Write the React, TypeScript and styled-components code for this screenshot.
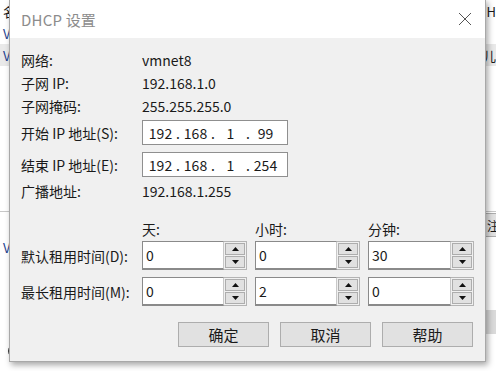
import React from "react";
import styled, { createGlobalStyle } from "styled-components";

const GlobalStyle = createGlobalStyle`
  html, body {
    margin: 0;
    padding: 0;
    background: #ffffff;
    overflow: hidden;
  }
  body {
    font-family: "Noto Sans CJK SC", "Noto Sans", sans-serif;
    font-size: 14px;
    color: #1a1a1a;
  }
`;

const Screen = styled.div`
  position: relative;
  width: 496px;
  height: 371px;
  overflow: hidden;
  background: #ffffff;
`;

/* the window behind the dialog, mostly hidden */
const BgWindow = styled.div`
  display: flex;
  flex-direction: column;
  width: 496px;
  height: 371px;
`;

const BgRow = styled.div<{ $h: number; $bg?: string; $line?: boolean }>`
  display: flex;
  align-items: center;
  justify-content: space-between;
  height: ${({ $h }) => $h}px;
  padding: 0 0 0 3px;
  background: ${({ $bg }) => $bg || "transparent"};
  border-bottom: ${({ $line }) => ($line ? "1px solid #c8c8c8" : "none")};
  box-sizing: border-box;
  font-size: 13px;
  white-space: nowrap;
  overflow: hidden;
`;

const BgText = styled.span<{ $color?: string }>`
  color: ${({ $color }) => $color || "#1a1a1a"};
`;

const BgButton = styled.div`
  height: 24px;
  width: 12px;
  border: 1px solid #adadad;
  border-right: none;
  background: #e1e1e1;
  display: flex;
  align-items: center;
  padding-left: 2px;
  box-sizing: border-box;
  overflow: hidden;
  font-size: 12px;
`;

const BgBar = styled.div`
  height: 24px;
  margin-left: 486px;
  background: #dadada;
`;

const BgRadio = styled.div`
  width: 14px;
  height: 14px;
  border-radius: 50%;
  border: 1px solid #333;
  margin-left: 5px;
`;

const Dialog = styled.div`
  position: absolute;
  left: 9px;
  top: -1px;
  width: 477px;
  height: 363px;
  display: flex;
  flex-direction: column;
  background: #f0f0f0;
  border: 1px solid #a8a8a8;
  box-sizing: border-box;
  box-shadow: 2px 3px 6px rgba(0, 0, 0, 0.35);
`;

const TitleBar = styled.div`
  height: 38px;
  flex: none;
  background: #ffffff;
  display: flex;
  align-items: center;
  justify-content: space-between;
  padding: 0 13px 0 11px;
`;

const Title = styled.span`
  font-size: 15px;
  color: #8c8c8c;
  letter-spacing: 0.2px;
`;

const Body = styled.div`
  display: flex;
  flex-direction: column;
  padding: 10px 12px 0 11px;
`;

const Row = styled.div<{ $h: number; $mt?: number }>`
  display: grid;
  grid-template-columns: 121px auto;
  align-items: center;
  height: ${({ $h }) => $h}px;
  margin-top: ${({ $mt }) => $mt || 0}px;
`;

const Label = styled.span`
  white-space: nowrap;
`;

const Value = styled.span``;

const IpField = styled.div`
  width: 146px;
  height: 25px;
  box-sizing: border-box;
  border: 1px solid #8f8f8f;
  background: #ffffff;
  display: flex;
  align-items: center;
  padding-left: 3px;
`;

const Octet = styled.span`
  width: 29px;
  text-align: center;
`;

const Dot = styled.span`
  width: 6px;
  text-align: center;
`;

const TimeGrid = styled.div`
  display: grid;
  grid-template-columns: 113px 105px 105px 106px;
  grid-template-rows: 10px 29px 29px;
  column-gap: 8px;
  row-gap: 7px;
  align-items: center;
  margin-top: 22px;
`;

const HeaderCell = styled.span`
  line-height: 10px;
  white-space: nowrap;
`;

const Spin = styled.div`
  height: 29px;
  box-sizing: border-box;
  border: 1px solid #b4b4b4;
  display: flex;
  background: #f0f0f0;
`;

const SpinEdit = styled.div`
  flex: 1;
  background: #ffffff;
  border-right: 1px solid #c8c8c8;
  border-bottom: 2px solid #8a8a8a;
  border-top: 1px solid #8a8a8a;
  border-left: 1px solid #8a8a8a;
  display: flex;
  align-items: center;
  padding-left: 3px;
  margin: -1px 0 -1px -1px;
`;

const SpinButtons = styled.div`
  width: 20px;
  display: flex;
  flex-direction: column;
  gap: 1px;
  padding: 1px;
`;

const SpinButton = styled.div`
  flex: 1;
  border: 1px solid #adadad;
  background: #e1e1e1;
  display: flex;
  align-items: center;
  justify-content: center;
`;

const Buttons = styled.div`
  display: flex;
  justify-content: flex-end;
  gap: 11px;
  margin-top: 16px;
`;

const Button = styled.div`
  width: 91px;
  height: 25px;
  box-sizing: border-box;
  border: 1px solid #adadad;
  background: #e1e1e1;
  display: flex;
  align-items: center;
  justify-content: center;
  font-size: 15px;
`;

const Arrow = ({ up }: { up?: boolean }) => (
  <svg width="7" height="4" viewBox="0 0 7 4">
    <polygon points={up ? "0,4 7,4 3.5,0" : "0,0 7,0 3.5,4"} fill="#111" />
  </svg>
);

const Close = () => (
  <svg width="14" height="14" viewBox="0 0 14 14">
    <path d="M1 1 L13 13 M13 1 L1 13" stroke="#555" strokeWidth="1" />
  </svg>
);

const SpinBox = ({ value }: { value: string }) => (
  <Spin>
    <SpinEdit>{value}</SpinEdit>
    <SpinButtons>
      <SpinButton>
        <Arrow up />
      </SpinButton>
      <SpinButton>
        <Arrow />
      </SpinButton>
    </SpinButtons>
  </Spin>
);

const Ip = ({ parts }: { parts: string[] }) => (
  <IpField>
    {parts.map((p, i) => (
      <React.Fragment key={i}>
        {i > 0 && <Dot>.</Dot>}
        <Octet>{p}</Octet>
      </React.Fragment>
    ))}
  </IpField>
);

export default function App() {
  return (
    <Screen>
      <GlobalStyle />
      <BgWindow>
        <BgRow $h={22}>
          <BgText>名</BgText>
          <BgText>H</BgText>
        </BgRow>
        <BgRow $h={22}>
          <BgText $color="#1f3f8f">V</BgText>
        </BgRow>
        <BgRow $h={22} $bg="#e9e9e9">
          <BgText $color="#1f3f8f">V</BgText>
          <BgText>口儿</BgText>
        </BgRow>
        <BgRow $h={146} $line />
        <BgRow $h={26}>
          <span />
          <BgButton>注</BgButton>
        </BgRow>
        <BgRow $h={18}>
          <BgText $color="#1f3f8f">V</BgText>
        </BgRow>
        <BgRow $h={54} />
        <BgBar />
        <BgRow $h={34}>
          <BgRadio />
        </BgRow>
      </BgWindow>

      <Dialog>
        <TitleBar>
          <Title>DHCP 设置</Title>
          <Close />
        </TitleBar>
        <Body>
          <Row $h={23}>
            <Label>网络:</Label>
            <Value>vmnet8</Value>
          </Row>
          <Row $h={23}>
            <Label>子网 IP:</Label>
            <Value>192.168.1.0</Value>
          </Row>
          <Row $h={23}>
            <Label>子网掩码:</Label>
            <Value>255.255.255.0</Value>
          </Row>
          <Row $h={25} $mt={3}>
            <Label>开始 IP 地址(S):</Label>
            <Ip parts={["192", "168", "1", "99"]} />
          </Row>
          <Row $h={25} $mt={7}>
            <Label>结束 IP 地址(E):</Label>
            <Ip parts={["192", "168", "1", "254"]} />
          </Row>
          <Row $h={23} $mt={2}>
            <Label>广播地址:</Label>
            <Value>192.168.1.255</Value>
          </Row>

          <TimeGrid>
            <span />
            <HeaderCell>天:</HeaderCell>
            <HeaderCell>小时:</HeaderCell>
            <HeaderCell>分钟:</HeaderCell>

            <Label>默认租用时间(D):</Label>
            <SpinBox value="0" />
            <SpinBox value="0" />
            <SpinBox value="30" />

            <Label>最长租用时间(M):</Label>
            <SpinBox value="0" />
            <SpinBox value="2" />
            <SpinBox value="0" />
          </TimeGrid>

          <Buttons>
            <Button>确定</Button>
            <Button>取消</Button>
            <Button>帮助</Button>
          </Buttons>
        </Body>
      </Dialog>
    </Screen>
  );
}
